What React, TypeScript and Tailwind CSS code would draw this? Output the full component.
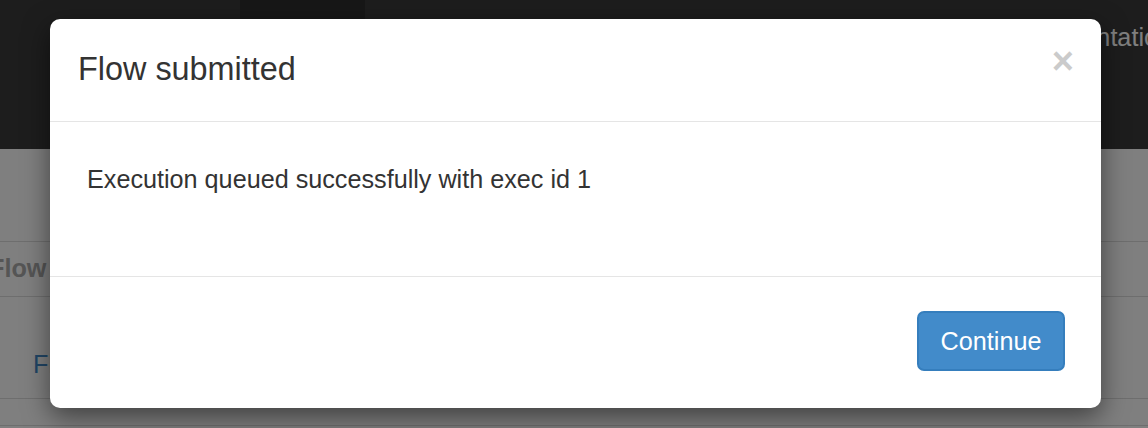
export default function App() {
    return (
        <div className="relative w-[1148px] h-[428px] overflow-hidden bg-white" style={{ fontFamily: '"Liberation Sans", Arial, sans-serif' }}>
            {/* Page behind the dialog */}
            <div className="h-[149px] bg-[#3b3b3b] flex">
                <div className="w-[240px]" />
                <div className="w-[125px] h-[100px] bg-[#2e2e2e]" />
                <div className="flex-1 flex justify-end pt-[19px]">
                    <span className="text-[25.2px] leading-[36px] text-[#ffffff] mr-[-24px]">Documentation</span>
                </div>
            </div>
            <div className="h-[92px]" />
            <div className="border-t border-[#dcdcdc] h-[55px] flex items-center">
                <span className="ml-[-11px] text-[25.2px] font-bold text-[#aaaaaa]">Flow</span>
            </div>
            <div className="border-t border-[#dcdcdc] h-[102px] flex items-center">
                <span className="ml-[33px] mt-[34px] text-[25.2px] text-[#428bca]">Flow</span>
            </div>
            <div className="border-t border-[#dcdcdc] h-[27px]" />
            <div className="border-t border-[#dcdcdc]" />

            {/* Backdrop */}
            <div className="absolute inset-0 bg-black/50" />

            {/* Dialog */}
            <div className="absolute left-[50px] top-[19px] w-[1051px] bg-white rounded-[10px] shadow-[0_9px_27px_rgba(0,0,0,0.5)] text-[#333333]">
                <div className="flex justify-between items-start pl-[28px] pr-[27px] pt-[27px] pb-[29px] border-b border-[#e5e5e5]">
                    <h4 className="text-[32.4px] leading-[46px]">Flow submitted</h4>
                    <button className="text-[38px] leading-none font-bold text-black opacity-20 mt-[-4px]">×</button>
                </div>
                <div className="h-[154px] pl-[37px] pt-[39px] text-[25.2px] leading-[36px]">
                    Execution queued successfully with exec id 1
                </div>
                <div className="border-t border-[#e5e5e5] h-[132px] flex justify-end items-start pt-[34px] pr-[36px]">
                    <button className="w-[148px] h-[60px] rounded-[7px] bg-[#428bca] border-2 border-[#357ebd] text-white text-[25.2px] leading-[36px]">
                        Continue
                    </button>
                </div>
            </div>
        </div>
    );
}
